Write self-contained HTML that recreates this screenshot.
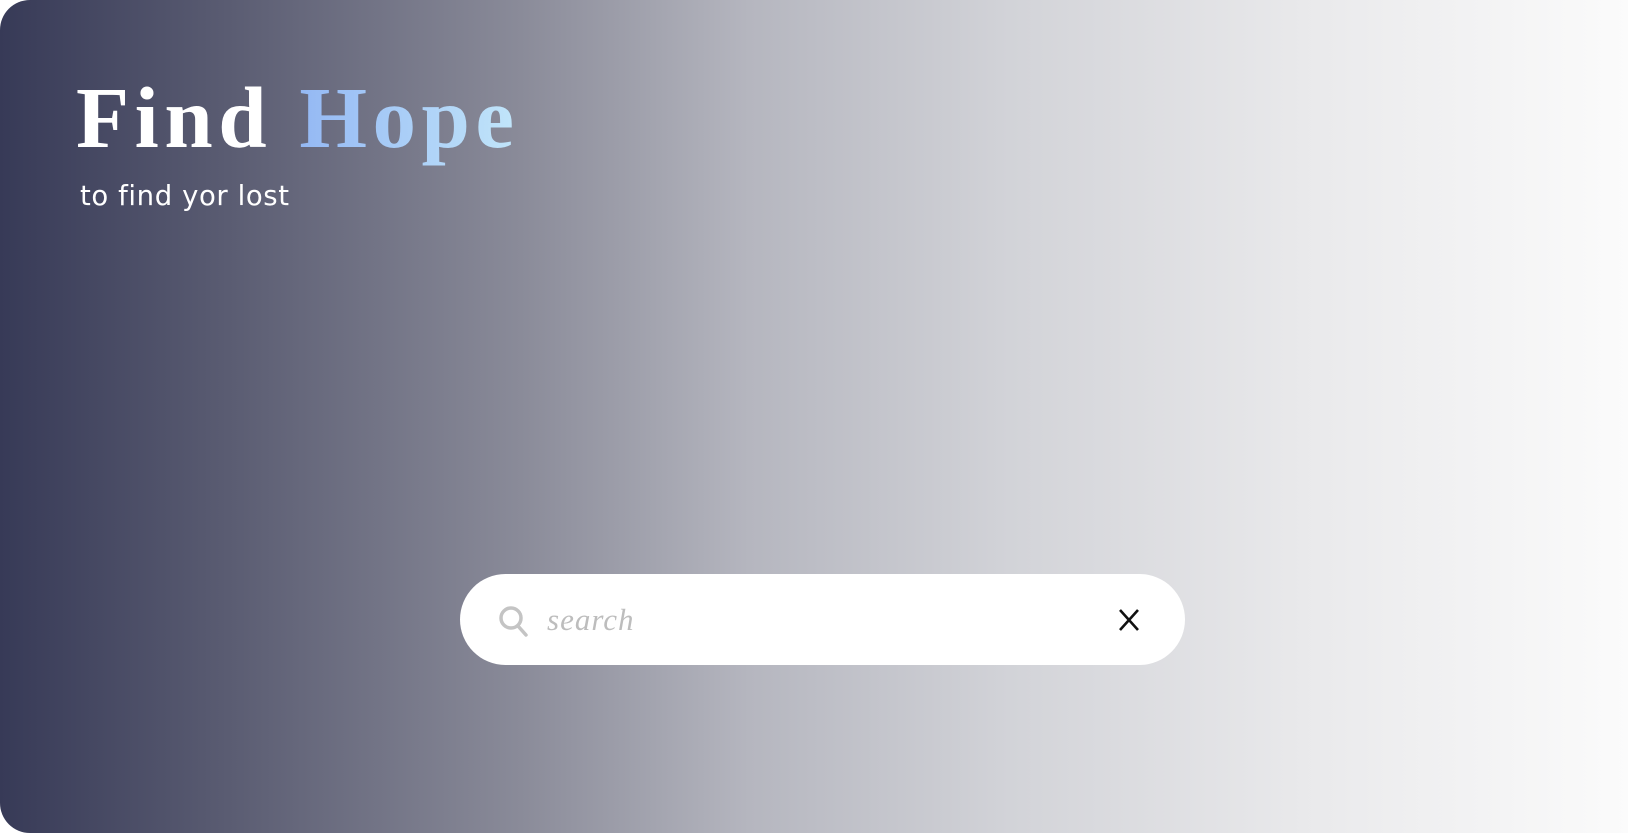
<!DOCTYPE html>
<html><head><meta charset="utf-8"><style>
html,body{margin:0;padding:0;background:#fff;width:1628px;height:833px;overflow:hidden}
.bg{position:absolute;left:0;top:0;width:1628px;height:833px;border-radius:30px 0 0 30px;
background:linear-gradient(90deg,#373a57 0%,#5a5c72 14%,#8a8b99 32%,#b5b6bf 46%,#d2d3d8 62%,#e9e9eb 80%,#fbfbfb 100%)}
h1{position:absolute;left:76px;top:63px;margin:0;font-family:"Liberation Serif",serif;font-weight:bold;font-size:87px;letter-spacing:5.5px;color:#fff;line-height:110px;white-space:nowrap}
h1 span{background:linear-gradient(90deg,#94b8f4,#c2e6fa);-webkit-background-clip:text;background-clip:text;color:transparent}
.sub{position:absolute;left:80px;top:180px;font-family:"DejaVu Sans","Liberation Sans",sans-serif;font-size:27.5px;color:#fff;letter-spacing:0.6px}
.bar{position:absolute;left:460px;top:574px;width:725px;height:91px;background:#fff;border-radius:46px}
.ph{position:absolute;left:87px;top:28px;font-family:"Liberation Serif",serif;font-style:italic;font-size:31px;color:#bdbdbd;letter-spacing:1px}
</style></head><body>
<div class="bg"></div>
<h1>Find <span>Hope</span></h1>
<div class="sub">to find yor lost</div>
<div class="bar">
<svg style="position:absolute;left:38px;top:32px" width="34" height="32" viewBox="0 0 34 32"><circle cx="13" cy="12" r="10" fill="none" stroke="#c4c4c4" stroke-width="3.5"/><line x1="20" y1="20" x2="28" y2="29" stroke="#c4c4c4" stroke-width="3.5" stroke-linecap="round"/></svg>
<div class="ph">search</div>
<svg style="position:absolute;left:658px;top:34px" width="22" height="24" viewBox="0 0 22 24"><path d="M2 2L20 22M20 2L2 22" stroke="#111" stroke-width="2.6"/></svg>
</div>
</body></html>
